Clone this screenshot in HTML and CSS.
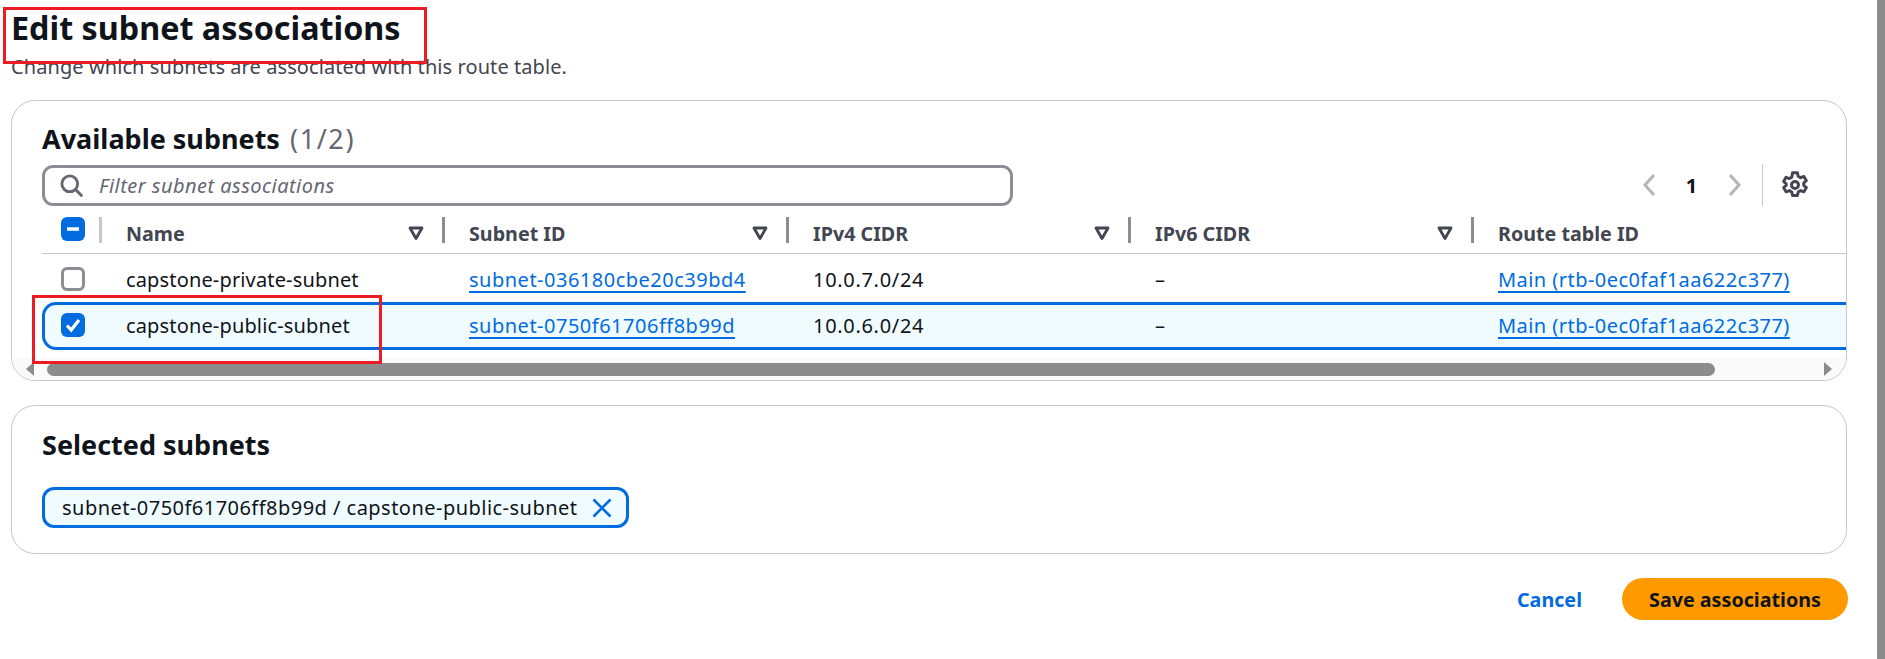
FILE: index.html
```html
<!DOCTYPE html>
<html lang="en">
<head>
<meta charset="utf-8">
<title>Edit subnet associations</title>
<link rel="stylesheet" href="styles.css">
</head>
<body>
<main class="page">
  <header class="page-head">
    <h1 class="title">Edit subnet associations</h1>
    <p class="subtitle">Change which subnets are associated with this route table.</p>
  </header>

  <section class="panel panel-table">
    <h2 class="panel-title">Available subnets <span class="count">(1/2)</span></h2>
    <div class="tools">
      <div class="filter">
        <svg class="search-icon" viewBox="0 0 16 16" fill="none" stroke="currentColor" stroke-width="2"><circle cx="6.8" cy="6.8" r="5.5"/><path d="M10.7 10.7 15.5 15.5"/></svg>
        <span class="placeholder">Filter subnet associations</span>
      </div>
      <div class="pager">
        <svg class="chev" viewBox="0 0 16 24" fill="none" stroke="currentColor" stroke-width="3"><path d="M13 2 4 12l9 10"/></svg>
        <span class="page-num">1</span>
        <svg class="chev" viewBox="0 0 16 24" fill="none" stroke="currentColor" stroke-width="3"><path d="m3 2 9 10-9 10"/></svg>
        <span class="pager-sep"></span>
        <svg class="gear" viewBox="0 0 16 16" fill="none" stroke="currentColor" stroke-width="1.7" stroke-linejoin="round"><path d="M6.6 1h2.8l.4 2 1.4.8 1.9-.7 1.4 2.4-1.5 1.3v1.4l1.5 1.3-1.4 2.4-1.9-.7-1.4.8-.4 2H6.6l-.4-2-1.4-.8-1.9.7-1.4-2.4 1.5-1.3V7.3L1.5 6l1.4-2.4 1.9.7 1.4-.8z"/><circle cx="8" cy="8" r="2"/></svg>
      </div>
    </div>

    <div class="grid grid-head">
      <div class="cell-check">
        <span class="box box-on"><svg viewBox="0 0 24 24"><path d="M6 12h12" stroke="#fff" stroke-width="3.4" fill="none"/></svg></span>
        <span class="sep sep-light"></span>
      </div>
      <div class="th">Name<svg class="sort" viewBox="0 0 16 16" fill="none" stroke="currentColor" stroke-width="2.8" stroke-linejoin="round"><path d="M2 3h12L8 13.5z"/></svg><span class="sep"></span></div>
      <div class="th">Subnet ID<svg class="sort" viewBox="0 0 16 16" fill="none" stroke="currentColor" stroke-width="2.8" stroke-linejoin="round"><path d="M2 3h12L8 13.5z"/></svg><span class="sep"></span></div>
      <div class="th">IPv4 CIDR<svg class="sort" viewBox="0 0 16 16" fill="none" stroke="currentColor" stroke-width="2.8" stroke-linejoin="round"><path d="M2 3h12L8 13.5z"/></svg><span class="sep"></span></div>
      <div class="th">IPv6 CIDR<svg class="sort" viewBox="0 0 16 16" fill="none" stroke="currentColor" stroke-width="2.8" stroke-linejoin="round"><path d="M2 3h12L8 13.5z"/></svg><span class="sep"></span></div>
      <div class="th th-last">Route table ID</div>
    </div>

    <div class="grid row row-plain">
      <div class="cell-check"><span class="box"></span></div>
      <div class="td">capstone-private-subnet</div>
      <div class="td"><a class="link">subnet-036180cbe20c39bd4</a></div>
      <div class="td num">10.0.7.0/24</div>
      <div class="td">–</div>
      <div class="td"><a class="link link-route">Main (rtb-0ec0faf1aa622c377)</a></div>
    </div>
    <div class="grid row row-selected">
      <div class="cell-check"><span class="box box-on"><svg viewBox="0 0 24 24"><path d="m6 12.5 4.2 4.5L18 7" stroke="#fff" stroke-width="3.2" fill="none"/></svg></span></div>
      <div class="td">capstone-public-subnet</div>
      <div class="td"><a class="link">subnet-0750f61706ff8b99d</a></div>
      <div class="td num">10.0.6.0/24</div>
      <div class="td">–</div>
      <div class="td"><a class="link link-route">Main (rtb-0ec0faf1aa622c377)</a></div>
    </div>

    <div class="hscroll">
      <svg class="arrow" viewBox="0 0 10 14"><path d="M10 0v14L2 7z" fill="#8c8c8c"/></svg>
      <div class="thumb"></div>
      <svg class="arrow" viewBox="0 0 10 14"><path d="M0 0v14l8-7z" fill="#8c8c8c"/></svg>
    </div>
  </section>

  <section class="panel panel-selected">
    <h2 class="panel-title">Selected subnets</h2>
    <div class="chip">
      <span class="chip-text">subnet-0750f61706ff8b99d / capstone-public-subnet</span>
      <svg class="chip-x" viewBox="0 0 20 20" fill="none" stroke="currentColor" stroke-width="2.6"><path d="m1.5 1.5 17 17M18.5 1.5l-17 17"/></svg>
    </div>
  </section>

  <footer class="actions">
    <a class="cancel">Cancel</a>
    <button class="save" type="button">Save associations</button>
  </footer>
</main>
<div class="page-scrollbar"></div>
<span class="mark mark-title"></span>
<span class="mark mark-row"></span>
</body>
</html>
```
FILE: styles.css
```css
* { box-sizing: border-box; }
html, body { margin: 0; height: 100%; }
body {
  display: flex;
  height: 659px;
  overflow: hidden;
  background: #fff;
  color: #0f141a;
  font-family: "Noto Sans", sans-serif;
  font-size: 20px;
  position: relative;
}
.page { flex: 1; min-width: 0; padding: 0 30px 0 11px; }
.page-scrollbar { width: 8px; background: #8c8c8c; flex: none; }

.page-head { height: 100px; padding-top: 8px; }
.title { margin: 0; font-size: 32.3px; line-height: 39px; font-weight: 700; letter-spacing: 0; }
.subtitle { margin: 7px 0 0; color: #424650; font-size: 20px; line-height: 26px; letter-spacing: .08px; }

.panel { border: 1.5px solid #c6c6cd; border-radius: 24px; background: #fff; overflow: hidden; }
.panel-table { height: 281px; padding-top: 18px; }
.panel-selected { height: 149px; margin-top: 24px; padding: 20px 30px 0; }
.panel-title { margin: 0; font-size: 27px; line-height: 38px; font-weight: 700; }
.panel-table .panel-title { padding-left: 30px; line-height: 40px; }
.count { color: #656871; font-weight: 400; letter-spacing: 1.6px; margin-left: 3px; }

.tools { display: flex; align-items: center; height: 42px; margin-top: 5px; padding-left: 30px; }
.filter {
  width: 971px; height: 41px; display: flex; align-items: center; gap: 15px; padding-left: 15px;
  border: 3px solid #8c8c94; border-radius: 11px;
}
.search-icon { width: 23px; height: 23px; color: #656871; }
.placeholder { font-style: italic; color: #656871; letter-spacing: .46px; margin-left: 1px; }
.pager { margin-left: auto; display: flex; align-items: center; padding-right: 37px; }
.chev { width: 16px; height: 24px; color: #b4b4bb; }
.page-num { width: 70px; text-align: center; font-weight: 700; }
.pager-sep { width: 1.5px; height: 42px; background: #c6c6cd; margin: 0 18px 0 19px; }
.gear { width: 28px; height: 28px; color: #424650; }

.grid { display: grid; grid-template-columns: 58px 343px 344px 342px 343px 1fr; }
.grid-head { height: 38px; margin: 10px 0 0 30px; border-bottom: 1.5px solid #c6c6cd; }
.cell-check { display: flex; align-items: center; padding-left: 19px; position: relative; }
.grid-head .cell-check { align-items: flex-start; padding-top: 1px; }
.th {
  display: flex; align-items: flex-start; padding: 4.5px 0 0 26px; line-height: 25px; position: relative;
  font-weight: 700; color: #424650; font-size: 19.7px;
}
.sort { position: absolute; right: 19px; top: 9px; width: 16px; height: 16px; }
.sep { position: absolute; right: -2px; top: 1px; width: 3px; height: 26px; background: #8c8c94; }
.sep-light { background: #c6c6cd; }
.box { width: 24px; height: 24px; border: 3px solid #8c8c94; border-radius: 6px; background: #fff; display: block; }
.box-on { border: 0; background: #006ce0; }
.box-on svg { display: block; width: 24px; height: 24px; }

.row { height: 48px; margin-left: 30px; align-items: center; }
.row-plain { padding-top: 2px; }
.row-selected {
  grid-template-columns: 55px 343px 344px 342px 343px 1fr;
  background: #f0fbff; border: 3px solid #006ce0; border-right: 0; border-radius: 14px 0 0 14px;
  padding-bottom: 2px;
}
.row-selected .cell-check { padding-left: 16px; }
.td { padding-left: 26px; white-space: nowrap; letter-spacing: .15px; }
.num { letter-spacing: .69px; }
.link {
  color: #006ce0; letter-spacing: .5px;
  text-decoration: underline; text-decoration-thickness: 2px; text-underline-offset: 4px;
}
.link-route { letter-spacing: .45px; }

.hscroll { height: 22px; margin-top: 8px; background: #fafafa; display: flex; align-items: center; padding: 0 12px; gap: 13px; }
.arrow { width: 10px; height: 14px; flex: none; }
.thumb { height: 13px; width: 1668px; background: #8c8c8c; border-radius: 7px; margin-right: auto; }

.chip {
  margin-top: 23px; width: 587px; height: 41px; display: flex; align-items: center; gap: 15px; padding-left: 17px;
  border: 3px solid #006ce0; border-radius: 12px; background: #f0fbff; white-space: nowrap;
}
.chip-text { letter-spacing: .47px; }
.chip-x { width: 20px; height: 20px; color: #006ce0; flex: none; }

.actions { display: flex; justify-content: flex-end; align-items: center; height: 42px; margin: 24px -1px 0 0; }
.cancel { color: #006ce0; font-weight: 700; margin-right: 40px; font-size: 19.7px; }
.save {
  width: 226px; height: 42px; border: 0; border-radius: 21px; background: #ff9900; color: #0f141a;
  font: 700 19.7px "Noto Sans", sans-serif; padding: 0;
}

.mark { position: absolute; border: 3px solid #ed1c24; pointer-events: none; }
.mark-title { left: 3px; top: 7px; width: 424px; height: 57px; }
.mark-row { left: 32px; top: 295px; width: 350px; height: 69px; }
```
